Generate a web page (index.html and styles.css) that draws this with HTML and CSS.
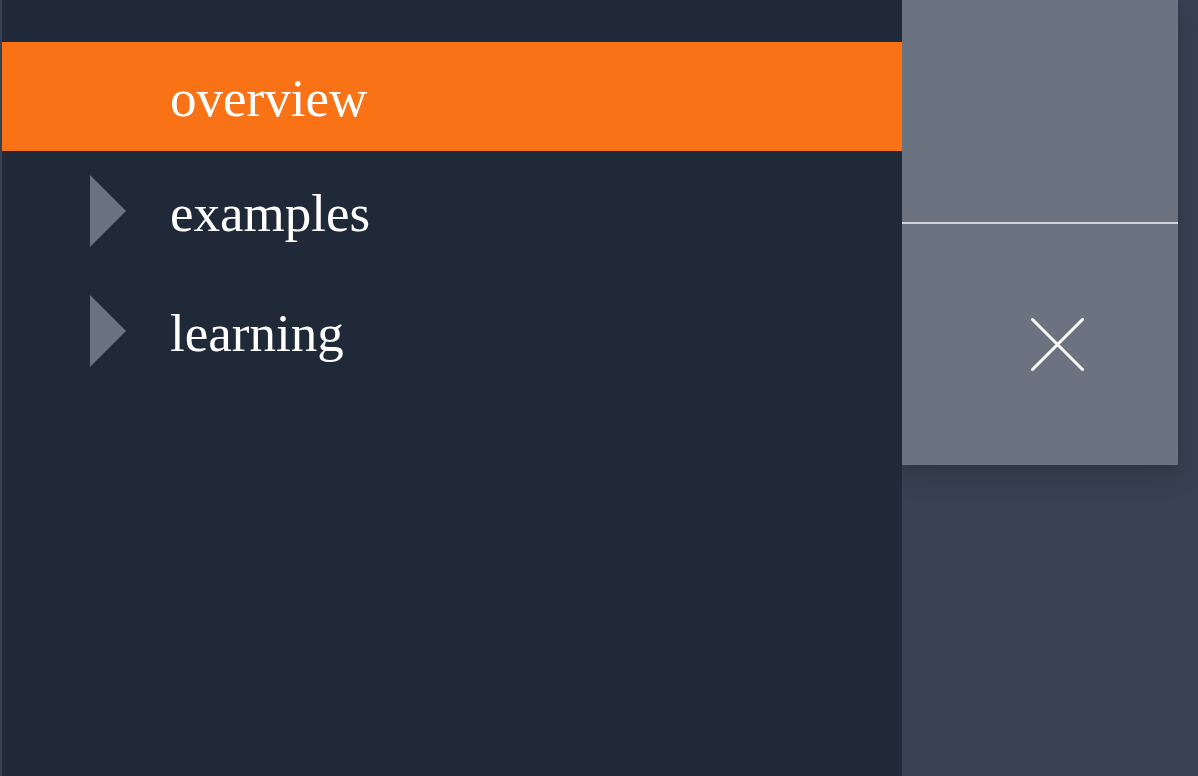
FILE: index.html
```html
<!DOCTYPE html>
<html>
<head>
<meta charset="utf-8">
<link rel="stylesheet" href="styles.css">
</head>
<body>
<div class="page">
  <nav class="sidebar">
    <a class="item active"><span class="caret-space"></span><span class="label">overview</span></a>
    <a class="item"><span class="caret"></span><span class="label">examples</span></a>
    <a class="item"><span class="caret"></span><span class="label">learning</span></a>
  </nav>
  <aside class="panel">
    <div class="panel-top"></div>
    <div class="panel-bottom">
      <svg class="close" width="53" height="53" viewBox="0 0 53 53">
        <path d="M1.5 1.5 L51.5 51.5 M51.5 1.5 L1.5 51.5" stroke="#ffffff" stroke-width="3" stroke-linecap="round" fill="none"/>
      </svg>
    </div>
  </aside>
</div>
</body>
</html>
```
FILE: styles.css
```css
html, body {
  margin: 0;
  padding: 0;
  height: 100%;
}
body {
  background: #374151;
  overflow: hidden;
}
.page {
  display: flex;
  height: 776px;
  padding-left: 2px;
}
.sidebar {
  width: 900px;
  background: #1f2937;
  padding-top: 42px;
  display: flex;
  flex-direction: column;
  position: relative;
  z-index: 1;
}
.item {
  display: flex;
  align-items: center;
  height: 120px;
  padding-left: 88px;
  font-family: Georgia, "Liberation Serif", serif;
  font-size: 53px;
  color: #ffffff;
}
.item.active {
  background: #f97316;
  height: 109px;
}
.caret-space {
  width: 36px;
  flex: none;
}
.caret {
  width: 0;
  height: 0;
  flex: none;
  border-top: 36px solid transparent;
  border-bottom: 36px solid transparent;
  border-left: 36px solid #6b7280;
}
.label {
  margin-left: 44px;
  line-height: 1;
  position: relative;
  top: 2px;
}
.panel {
  width: 276px;
  align-self: flex-start;
  background: #6b7280;
  box-shadow: 0 10px 25px rgba(0, 0, 0, 0.15), 0 4px 8px rgba(0, 0, 0, 0.06);
}
.panel-top {
  height: 222px;
  border-bottom: 2px solid #d1d5db;
}
.panel-bottom {
  height: 241px;
  display: flex;
  align-items: center;
  padding-left: 129px;
}
.close {
  display: block;
}
```
